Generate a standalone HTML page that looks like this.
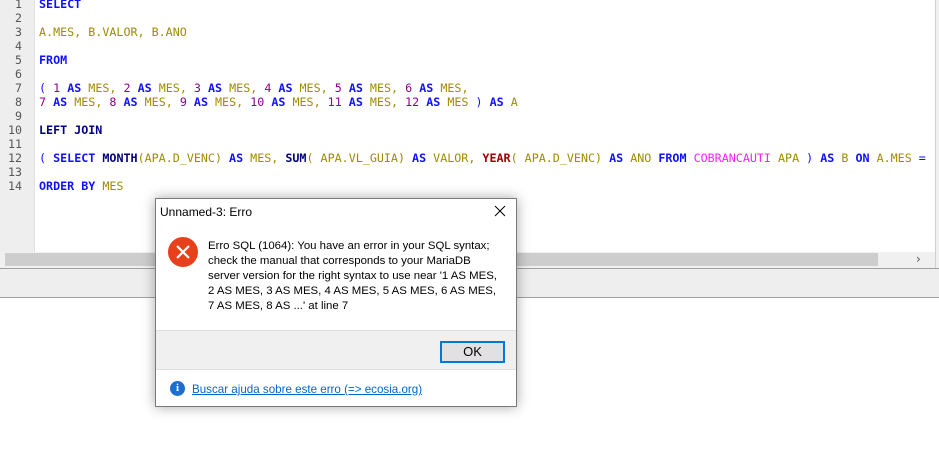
<!DOCTYPE html>
<html><head><meta charset="utf-8"><style>
*{margin:0;padding:0;box-sizing:border-box}
body{width:939px;height:455px;overflow:hidden;background:#fff;position:relative;font-family:"DejaVu Sans Mono","Liberation Mono",monospace}
.gut{position:absolute;left:0;top:0;width:35px;height:252px;background:#eeeeee;border-right:1px solid #e0e0e0}
.ln{position:absolute;left:0;width:22px;text-align:right;font-size:11.6px;color:#555;line-height:14px}
.code{position:absolute;left:39px;font-size:11.7px;line-height:14px;white-space:pre;color:#a08a00}
.k{color:#1010ff;font-weight:bold}
.n{color:#900090}
.f{color:#000080;font-weight:bold}
.y{color:#a00000;font-weight:bold}
.t{color:#ff20ff}
.p{color:#1010ff}
.sb{position:absolute;left:0;top:252px;width:935px;height:16px;background:#f0f0f0}
.thumb{position:absolute;left:5px;top:253px;width:873px;height:13px;background:#cdcdcd}
.vr{position:absolute;left:935px;top:0;width:4px;height:268px;background:#f0f0f0;border-left:1px solid #d0d0d0}
.panel{position:absolute;left:0;top:268px;width:939px;height:30px;background:#eeeeee;border-top:1px solid #a0a0a0;border-bottom:1px solid #a0a0a0}
.dlg{position:absolute;left:155px;top:198px;width:362px;height:209px;background:#fff;border:1px solid #7a7a7a;box-shadow:0 0 12px rgba(0,0,0,.35);font-family:"Liberation Sans",sans-serif;font-size:12px;color:#000}
.ttl{position:absolute;left:4px;top:6px;font-size:12px}
.x{position:absolute;right:10px;top:6px}
.msg{position:absolute;left:52px;top:40px;line-height:15px;font-size:11.4px}
.ico{position:absolute;left:12px;top:38px;width:30px;height:30px;border-radius:50%;background:#e8401c}
.band{position:absolute;left:0;top:131px;width:360px;height:40px;background:#f0f0f0;border-top:1px solid #dfdfdf;border-bottom:1px solid #dfdfdf}
.ok{position:absolute;left:284px;top:10px;width:65px;height:22px;border:2px solid #0078d7;background:#e1e1e1;text-align:center;line-height:18px;font-size:13px}
.help{position:absolute;left:36px;top:184px;color:#0066cc;text-decoration:underline;font-size:11.6px}
.inf{position:absolute;left:14px;top:182px;width:15px;height:15px;border-radius:50%;background:#1a6fd1;color:#fff;font-size:11px;font-weight:bold;text-align:center;line-height:15px;font-family:"Liberation Serif",serif}
</style></head><body>
<div class="gut"></div>
<div class="ln" style="top:-3px">1<br>2<br>3<br>4<br>5<br>6<br>7<br>8<br>9<br>10<br>11<br>12<br>13<br>14</div>
<div class="code" style="top:-3px"><span class="k">SELECT</span>

A.MES, B.VALOR, B.ANO

<span class="k">FROM</span>

<span class="p">(</span> <span class="n">1</span> <span class="k">AS</span> MES, <span class="n">2</span> <span class="k">AS</span> MES, <span class="n">3</span> <span class="k">AS</span> MES, <span class="n">4</span> <span class="k">AS</span> MES, <span class="n">5</span> <span class="k">AS</span> MES, <span class="n">6</span> <span class="k">AS</span> MES,
<span class="n">7</span> <span class="k">AS</span> MES, <span class="n">8</span> <span class="k">AS</span> MES, <span class="n">9</span> <span class="k">AS</span> MES, <span class="n">10</span> <span class="k">AS</span> MES, <span class="n">11</span> <span class="k">AS</span> MES, <span class="n">12</span> <span class="k">AS</span> MES <span class="p">)</span> <span class="k">AS</span> A

<span class="k" style="color:#000080">LEFT JOIN</span>

<span class="p">(</span> <span class="k">SELECT</span> <span class="f">MONTH</span>(APA.D_VENC) <span class="k">AS</span> MES, <span class="f">SUM</span>( APA.VL_GUIA) <span class="k">AS</span> VALOR, <span class="y">YEAR</span>( APA.D_VENC) <span class="k">AS</span> ANO <span class="k">FROM</span> <span class="t">COBRANCAUTI</span> APA <span class="p">)</span> <span class="k">AS</span> B <span class="k">ON</span> A.MES <span class="p">=</span> 

<span class="k">ORDER BY</span> MES</div>
<div class="vr"></div>
<div class="sb"></div><div class="thumb"></div>
<div style="position:absolute;left:916px;top:252px;font-size:12px;color:#555;font-family:'DejaVu Sans',sans-serif">›</div>
<div class="panel"></div>
<div class="dlg">
<div class="ttl">Unnamed-3: Erro</div>
<div class="x"><svg width="12" height="12"><path d="M1 1L11 11M11 1L1 11" stroke="#000" stroke-width="1"/></svg></div>
<div class="ico"><svg width="30" height="30"><path d="M9 9L21 21M21 9L9 21" stroke="#fff" stroke-width="2.2"/></svg></div>
<div class="msg">Erro SQL (1064): You have an error in your SQL syntax;<br>check the manual that corresponds to your MariaDB<br>server version for the right syntax to use near '1 AS MES,<br>2 AS MES, 3 AS MES, 4 AS MES, 5 AS MES, 6 AS MES,<br>7 AS MES, 8 AS ...' at line 7</div>
<div class="band"><div class="ok">OK</div></div>
<div class="inf">i</div>
<div class="help">Buscar ajuda sobre este erro (=&gt; ecosia.org)</div>
</div>
</body></html>
